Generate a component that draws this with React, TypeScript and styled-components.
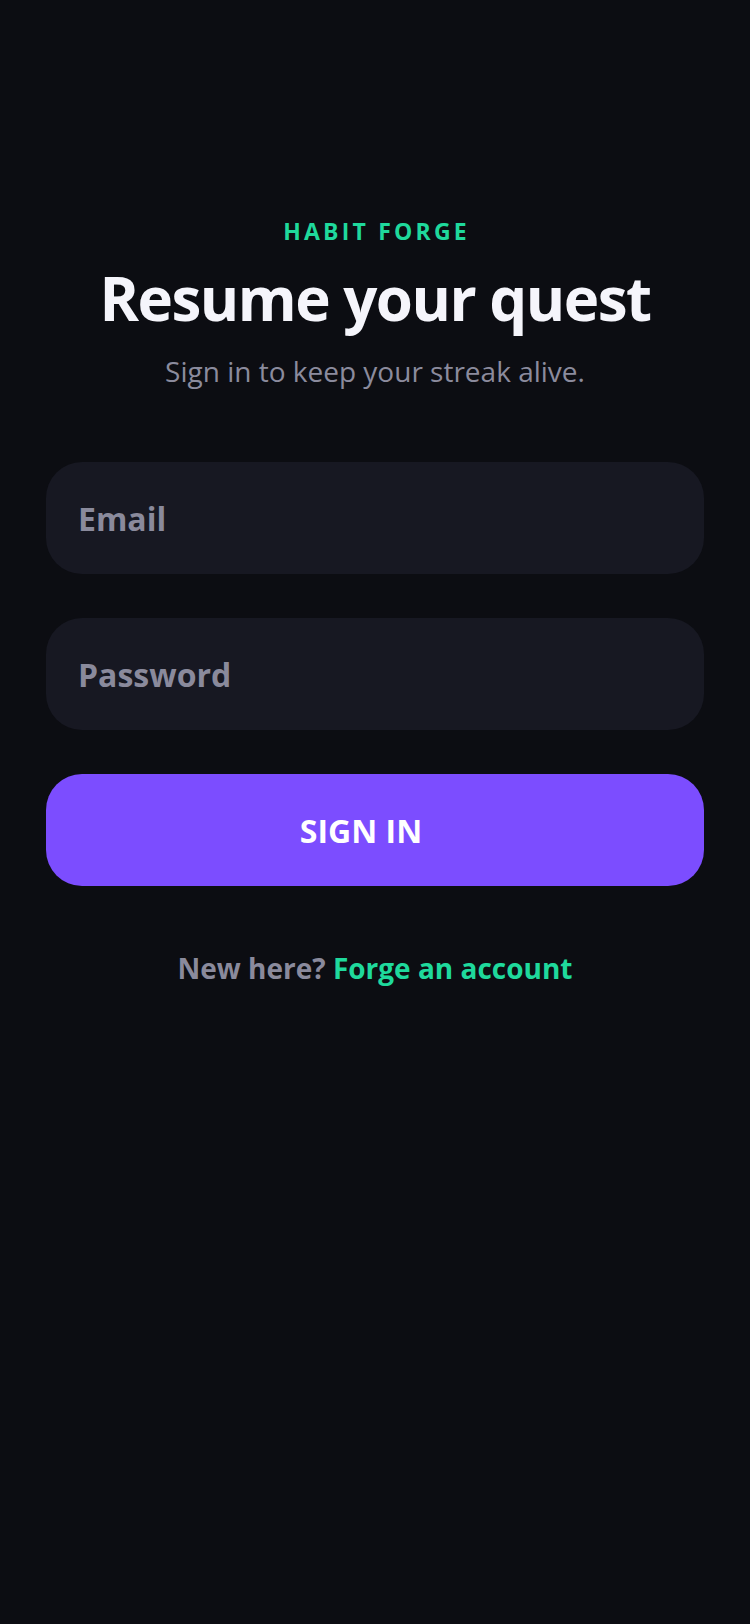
import React from 'react';
import styled, { createGlobalStyle } from 'styled-components';

const GlobalStyle = createGlobalStyle`
  html, body {
    margin: 0;
    padding: 0;
    background: #0c0d12;
  }
  body {
    font-family: "Open Sans", "Noto Sans", sans-serif;
    -webkit-font-smoothing: antialiased;
  }
  * {
    box-sizing: border-box;
  }
`

const Screen = styled.div`
  min-height: 1624px;
  background: #0c0d12;
  padding: 215px 46px 0;
  display: flex;
  flex-direction: column;
`

const Header = styled.header`
  display: flex;
  flex-direction: column;
  align-items: center;
  text-align: center;
`

const Brand = styled.div`
  font-size: 23px;
  line-height: 32px;
  font-weight: 700;
  letter-spacing: 3.2px;
  padding-left: 3.2px;
  color: #1fd99c;
`

const Title = styled.h1`
  margin: 15px 0 0;
  font-size: 60px;
  line-height: 72px;
  font-weight: 700;
  letter-spacing: -1.5px;
  color: #f5f5fb;
`

const Subtitle = styled.p`
  margin: 17px 0 0;
  font-size: 28px;
  line-height: 40px;
  font-weight: 400;
  color: #8b8b9d;
`

const Form = styled.form`
  margin-top: 71px;
  display: flex;
  flex-direction: column;
  gap: 44px;
`

const Field = styled.input`
  width: 100%;
  height: 112px;
  border: none;
  outline: none;
  border-radius: 36px;
  background: #171822;
  padding: 0 32px;
  font-family: inherit;
  font-size: 32px;
  font-weight: 700;
  color: #e8e8f0;

  &::placeholder {
    color: #8a8a9c;
    opacity: 1;
  }
`

const SubmitButton = styled.button`
  width: 100%;
  height: 112px;
  border: none;
  border-radius: 36px;
  background: #7c4dff;
  color: #ffffff;
  padding: 0 28px 0 0;
  font-family: inherit;
  font-size: 32px;
  font-weight: 700;
  cursor: pointer;
`

const Footer = styled.p`
  margin: 63px 0 0;
  text-align: center;
  font-size: 28px;
  line-height: 38px;
  font-weight: 700;
  color: #8a8a9c;
`

const FooterLink = styled.a`
  color: #1fd99c;
  text-decoration: none;
`

export default function App() {
  return (
    <>
      <GlobalStyle />
      <Screen>
        <Header>
          <Brand>HABIT FORGE</Brand>
          <Title>Resume your quest</Title>
          <Subtitle>Sign in to keep your streak alive.</Subtitle>
        </Header>

        <Form onSubmit={e => e.preventDefault()}>
          <Field type="email" placeholder="Email" />
          <Field type="password" placeholder="Password" />
          <SubmitButton type="submit">SIGN IN</SubmitButton>
        </Form>

        <Footer>
          New here? <FooterLink href="#">Forge an account</FooterLink>
        </Footer>
      </Screen>
    </>
  );
}
